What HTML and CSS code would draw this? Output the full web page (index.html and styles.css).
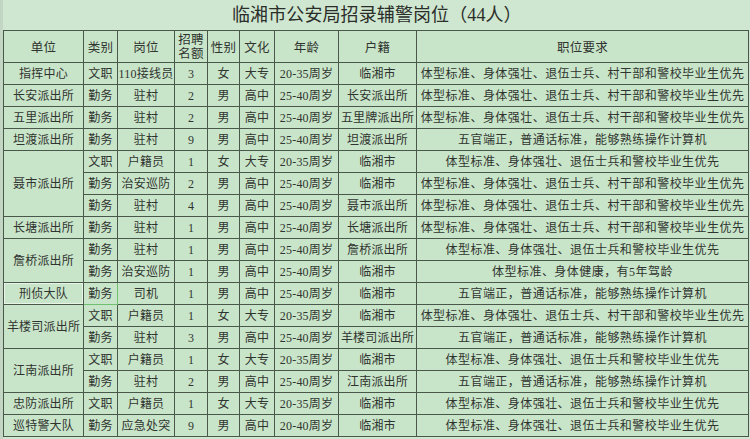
FILE: index.html
```html
<!DOCTYPE html>
<html lang="zh-CN">
<head>
<meta charset="utf-8">
<title>临湘市公安局招录辅警岗位</title>
<link rel="stylesheet" href="styles.css">
</head>
<body>
<div class="sheet">
  <div class="strip"></div>
  <div class="main">
    <div class="title">临湘市公安局招录辅警岗位（44人）</div>
    <table class="grid">
      <colgroup>
        <col class="c-unit"><col class="c-type"><col class="c-post"><col class="c-num"><col class="c-sex"><col class="c-edu"><col class="c-age"><col class="c-home"><col class="c-req">
      </colgroup>
      <thead>
        <tr><th>单位</th><th>类别</th><th>岗位</th><th class="two">招聘<br>名额</th><th>性别</th><th>文化</th><th>年龄</th><th>户籍</th><th>职位要求</th></tr>
      </thead>
      <tbody>
        <tr><td>指挥中心</td><td>文职</td><td>110接线员</td><td>3</td><td>女</td><td>大专</td><td>20-35周岁</td><td>临湘市</td><td class="req">体型标准、身体强壮、退伍士兵、村干部和警校毕业生优先</td></tr>
        <tr><td>长安派出所</td><td>勤务</td><td>驻村</td><td>2</td><td>男</td><td>高中</td><td>25-40周岁</td><td>长安派出所</td><td class="req">体型标准、身体强壮、退伍士兵、村干部和警校毕业生优先</td></tr>
        <tr><td>五里派出所</td><td>勤务</td><td>驻村</td><td>2</td><td>男</td><td>高中</td><td>25-40周岁</td><td>五里牌派出所</td><td class="req">体型标准、身体强壮、退伍士兵、村干部和警校毕业生优先</td></tr>
        <tr><td>坦渡派出所</td><td>勤务</td><td>驻村</td><td>9</td><td>男</td><td>高中</td><td>25-40周岁</td><td>坦渡派出所</td><td class="req">五官端正，普通话标准，能够熟练操作计算机</td></tr>
        <tr><td rowspan="3">聂市派出所</td><td>文职</td><td>户籍员</td><td>1</td><td>女</td><td>大专</td><td>20-35周岁</td><td>临湘市</td><td class="req">体型标准、身体强壮、退伍士兵和警校毕业生优先</td></tr>
        <tr><td>勤务</td><td>治安巡防</td><td>2</td><td>男</td><td>高中</td><td>25-40周岁</td><td>临湘市</td><td class="req">体型标准、身体强壮、退伍士兵、村干部和警校毕业生优先</td></tr>
        <tr><td>勤务</td><td>驻村</td><td>4</td><td>男</td><td>高中</td><td>25-40周岁</td><td>聂市派出所</td><td class="req">体型标准、身体强壮、退伍士兵、村干部和警校毕业生优先</td></tr>
        <tr><td>长塘派出所</td><td>勤务</td><td>驻村</td><td>1</td><td>男</td><td>高中</td><td>25-40周岁</td><td>长塘派出所</td><td class="req">体型标准、身体强壮、退伍士兵、村干部和警校毕业生优先</td></tr>
        <tr><td rowspan="2">詹桥派出所</td><td>勤务</td><td>驻村</td><td>1</td><td>男</td><td>高中</td><td>25-40周岁</td><td>詹桥派出所</td><td class="req">体型标准、身体强壮、退伍士兵和警校毕业生优先</td></tr>
        <tr><td>勤务</td><td>治安巡防</td><td>1</td><td>男</td><td>高中</td><td>25-40周岁</td><td>临湘市</td><td class="req">体型标准、身体健康，有5年驾龄</td></tr>
        <tr><td class="sel-range">刑侦大队</td><td class="sel-cell">勤务</td><td>司机</td><td>1</td><td>男</td><td>高中</td><td>25-40周岁</td><td>临湘市</td><td class="req">五官端正，普通话标准，能够熟练操作计算机</td></tr>
        <tr><td rowspan="2">羊楼司派出所</td><td>文职</td><td>户籍员</td><td>1</td><td>女</td><td>大专</td><td>20-35周岁</td><td>临湘市</td><td class="req">体型标准、身体强壮、退伍士兵、村干部和警校毕业生优先</td></tr>
        <tr><td>勤务</td><td>驻村</td><td>3</td><td>男</td><td>高中</td><td>25-40周岁</td><td>羊楼司派出所</td><td class="req">五官端正，普通话标准，能够熟练操作计算机</td></tr>
        <tr><td rowspan="2">江南派出所</td><td>文职</td><td>户籍员</td><td>1</td><td>女</td><td>大专</td><td>20-35周岁</td><td>临湘市</td><td class="req">体型标准、身体强壮、退伍士兵和警校毕业生优先</td></tr>
        <tr><td>勤务</td><td>驻村</td><td>2</td><td>男</td><td>高中</td><td>25-40周岁</td><td>江南派出所</td><td class="req">五官端正，普通话标准，能够熟练操作计算机</td></tr>
        <tr><td>忠防派出所</td><td>文职</td><td>户籍员</td><td>1</td><td>女</td><td>大专</td><td>20-35周岁</td><td>临湘市</td><td class="req">体型标准、身体强壮、退伍士兵和警校毕业生优先</td></tr>
        <tr><td>巡特警大队</td><td>勤务</td><td>应急处突</td><td>9</td><td>男</td><td>高中</td><td>20-40周岁</td><td>临湘市</td><td class="req">体型标准、身体强壮、退伍士兵和警校毕业生优先</td></tr>
      </tbody>
    </table>
  </div>
</div>
</body>
</html>
```
FILE: styles.css
```css
html, body {
  margin: 0;
  padding: 0;
  background: #cfe7d0;
}
body {
  width: 750px;
  height: 439px;
  overflow: hidden;
  font-family: "Liberation Serif", "Noto Sans CJK SC", serif;
  color: #303430;
}
.sheet {
  display: flex;
  height: 439px;
}
.strip {
  width: 3px;
  flex: none;
  background: #c3d6c4;
}
.main {
  flex: none;
  width: 746px;
}
.title {
  height: 30px;
  line-height: 30px;
  font-family: "Liberation Serif", "Noto Sans CJK SC", sans-serif;
  font-size: 18px;
  color: #2a2d2a;
  text-align: left;
  padding-left: 229px;
  letter-spacing: 0.1px;
}
.grid {
  border-collapse: collapse;
  table-layout: fixed;
  width: 745px;
  background: #c9e5c9;
}
.c-unit { width: 80px; }
.c-type { width: 34px; }
.c-post { width: 57px; }
.c-num  { width: 33px; }
.c-sex  { width: 32px; }
.c-edu  { width: 35px; }
.c-age  { width: 64px; }
.c-home { width: 78px; }
.c-req  { width: 332px; }
.grid th, .grid td {
  border: 1px solid #4a584b;
  padding: 0;
  text-align: center;
  vertical-align: middle;
  white-space: nowrap;
  overflow: hidden;
  font-weight: normal;
  font-size: 12px;
  letter-spacing: 0.2px;
}
.grid td.req { letter-spacing: 0.45px; }
.grid thead tr { height: 32px; }
.grid th { font-size: 12.5px; }
.grid th.two { line-height: 14px; }
.grid tbody tr { height: 22px; }
.grid td { line-height: 20px; }
.grid td.sel-range {
  box-shadow: inset 0 0 0 1px #e6f3e6;
}
.grid td.sel-cell {
  border: 1px solid #6fbf70;
}
```
